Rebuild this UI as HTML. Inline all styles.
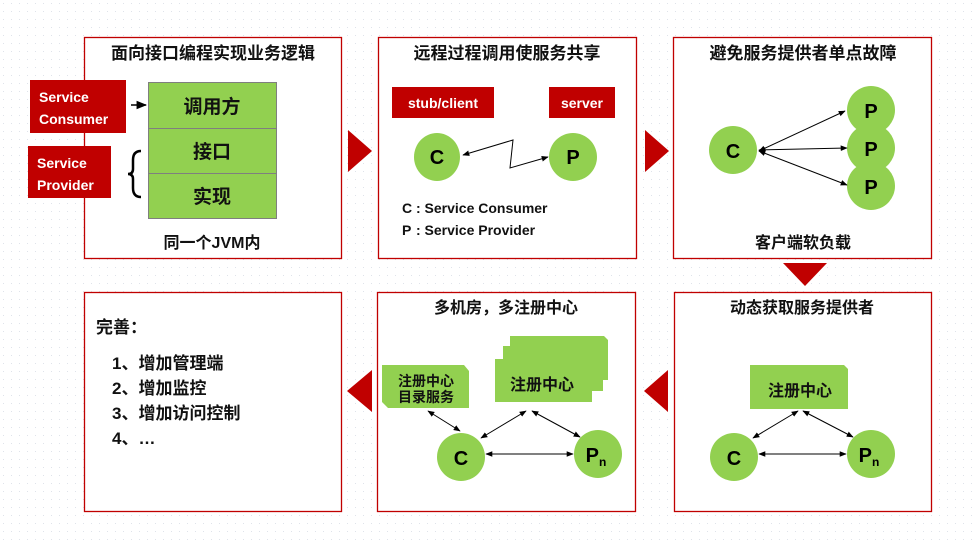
<!DOCTYPE html>
<html><head><meta charset="utf-8"><style>
html,body{margin:0;padding:0;background:#fff;}
svg{display:block;font-family:"Liberation Sans","Noto Sans CJK SC",sans-serif;}
</style></head><body>
<svg width="972" height="547" viewBox="0 0 972 547" xmlns="http://www.w3.org/2000/svg">
<defs>
<pattern id="dots" width="8" height="8" patternUnits="userSpaceOnUse"><rect x="3" y="3" width="1" height="1" fill="#dfe3ea"/></pattern>
<marker id="ah" viewBox="0 0 10 10" refX="9" refY="5" markerWidth="7" markerHeight="7" orient="auto-start-reverse"><path d="M0,1 L10,5 L0,9 Z" fill="#000"/></marker>
</defs>
<rect width="972" height="547" fill="url(#dots)"/>
<g fill="#fff" stroke="#c00000" stroke-width="1.3">
<rect x="84.5" y="37.5" width="257" height="221"/>
<rect x="378.5" y="37.5" width="258" height="221"/>
<rect x="673.5" y="37.5" width="258" height="221"/>
<rect x="84.5" y="292.5" width="257" height="219"/>
<rect x="377.5" y="292.5" width="258" height="219"/>
<rect x="674.5" y="292.5" width="257" height="219"/>
</g>
<g fill="#c00000">
<path d="M348,130 L372,151 L348,172 Z"/>
<path d="M645,130 L669,151 L645,172 Z"/>
<path d="M783,263 L827,263 L805,286 Z"/>
<path d="M347,391 L372,370 L372,412 Z"/>
<path d="M644,391 L668,370 L668,412 Z"/>
</g>
<g font-weight="bold" font-size="17" fill="#111" text-anchor="middle">
<text x="213" y="59">面向接口编程实现业务逻辑</text>
<text x="507" y="59">远程过程调用使服务共享</text>
<text x="803" y="59">避免服务提供者单点故障</text>
<text x="212" y="248" font-size="16">同一个JVM内</text>
<text x="803" y="248" font-size="16">客户端软负载</text>
<text x="506" y="313" font-size="16">多机房，多注册中心</text>
<text x="802" y="313" font-size="16">动态获取服务提供者</text>
</g>
<g stroke="#7f7f7f" stroke-width="1" fill="#92d050">
<rect x="148.5" y="82.5" width="128" height="46"/>
<rect x="148.5" y="128.5" width="128" height="45"/>
<rect x="148.5" y="173.5" width="128" height="45"/>
</g>
<g font-size="19" font-weight="bold" text-anchor="middle" fill="#111">
<text x="212" y="113">调用方</text>
<text x="212" y="158">接口</text>
<text x="212" y="203">实现</text>
</g>
<rect x="30" y="80" width="96" height="53" fill="#c00000"/>
<rect x="28" y="146" width="83" height="52" fill="#c00000"/>
<g fill="#fff" font-size="14" font-weight="bold">
<text x="39" y="102">Service</text><text x="39" y="124">Consumer</text>
<text x="37" y="168">Service</text><text x="37" y="190">Provider</text>
</g>
<line x1="131" y1="105" x2="146" y2="105" stroke="#000" stroke-width="1.5" marker-end="url(#ah)"/>
<path d="M141,151 Q133,151 133,160 L133,169 Q133,174 128,174 Q133,174 133,179 L133,188 Q133,197 141,197" fill="none" stroke="#000" stroke-width="2.5"/>
<rect x="392" y="87" width="102" height="31" fill="#c00000"/>
<rect x="549" y="87" width="66" height="31" fill="#c00000"/>
<g fill="#fff" font-size="14" font-weight="bold" text-anchor="middle">
<text x="443" y="108">stub/client</text><text x="582" y="108">server</text>
</g>
<ellipse cx="437" cy="157" rx="23" ry="24" fill="#92d050"/>
<ellipse cx="573" cy="157" rx="24" ry="24" fill="#92d050"/>
<polyline points="463,155 513,140 510,168 548,157" fill="none" stroke="#000" stroke-width="1" marker-start="url(#ah)" marker-end="url(#ah)"/>
<g font-size="20" font-weight="bold" text-anchor="middle" fill="#000">
<text x="437" y="164">C</text><text x="573" y="164">P</text>
</g>
<g font-size="14" font-weight="bold" fill="#111">
<text x="402" y="213">C</text><text x="416" y="213">: Service Consumer</text>
<text x="402" y="235">P</text><text x="416" y="235">: Service Provider</text>
</g>
<ellipse cx="733" cy="150" rx="24" ry="24" fill="#92d050"/>
<circle cx="871" cy="110" r="24" fill="#92d050"/>
<circle cx="871" cy="148" r="24" fill="#92d050"/>
<circle cx="871" cy="186" r="24" fill="#92d050"/>
<g font-size="20" font-weight="bold" text-anchor="middle" fill="#000">
<text x="733" y="158">C</text>
<text x="871" y="118">P</text>
<text x="871" y="156">P</text>
<text x="871" y="194">P</text>
</g>
<g stroke="#000" stroke-width="1" marker-start="url(#ah)" marker-end="url(#ah)">
<line x1="759" y1="151" x2="845" y2="111"/>
<line x1="759" y1="150" x2="847" y2="148"/>
<line x1="759" y1="151" x2="847" y2="185"/>
</g>
<g font-size="17" font-weight="bold" fill="#111">
<text x="96" y="333">完善：</text>
<text x="112" y="369">1、增加管理端</text>
<text x="112" y="394">2、增加监控</text>
<text x="112" y="419">3、增加访问控制</text>
<text x="112" y="444">4、…</text>
</g>
<path d="M382,365 L464,365 L469,371 L469,408 L388,408 L382,402 Z" fill="#92d050"/>
<path d="M510,336 L604,336 L608,340 L608,380 L510,380 Z" fill="#92d050"/>
<path d="M503,346 L603,346 L603,391 L503,391 Z" fill="#92d050"/>
<path d="M495,359 L592,359 L592,402 L495,402 Z" fill="#92d050"/>
<g font-size="14" font-weight="bold" fill="#111" text-anchor="middle">
<text x="426" y="386">注册中心</text><text x="426" y="402">目录服务</text>
</g>
<text x="542" y="390" font-size="16" font-weight="bold" text-anchor="middle" fill="#111">注册中心</text>
<ellipse cx="461" cy="457" rx="24" ry="24" fill="#92d050"/>
<ellipse cx="598" cy="454" rx="24" ry="24" fill="#92d050"/>
<text x="461" y="465" font-size="20" font-weight="bold" text-anchor="middle">C</text>
<text x="596" y="462" font-size="20" font-weight="bold" text-anchor="middle">P<tspan font-size="12" dy="4">n</tspan></text>
<g stroke="#000" stroke-width="1" marker-start="url(#ah)" marker-end="url(#ah)">
<line x1="428" y1="411" x2="460" y2="431"/>
<line x1="526" y1="411" x2="481" y2="438"/>
<line x1="532" y1="411" x2="580" y2="437"/>
<line x1="486" y1="454" x2="573" y2="454"/>
</g>
<path d="M750,365 L844,365 L848,369 L848,409 L750,409 Z" fill="#92d050"/>
<text x="800" y="396" font-size="16" font-weight="bold" text-anchor="middle" fill="#111">注册中心</text>
<ellipse cx="734" cy="457" rx="24" ry="24" fill="#92d050"/>
<ellipse cx="871" cy="454" rx="24" ry="24" fill="#92d050"/>
<text x="734" y="465" font-size="20" font-weight="bold" text-anchor="middle">C</text>
<text x="869" y="462" font-size="20" font-weight="bold" text-anchor="middle">P<tspan font-size="12" dy="4">n</tspan></text>
<g stroke="#000" stroke-width="1" marker-start="url(#ah)" marker-end="url(#ah)">
<line x1="798" y1="411" x2="753" y2="438"/>
<line x1="803" y1="411" x2="853" y2="437"/>
<line x1="759" y1="454" x2="846" y2="454"/>
</g>
</svg>
</body></html>
